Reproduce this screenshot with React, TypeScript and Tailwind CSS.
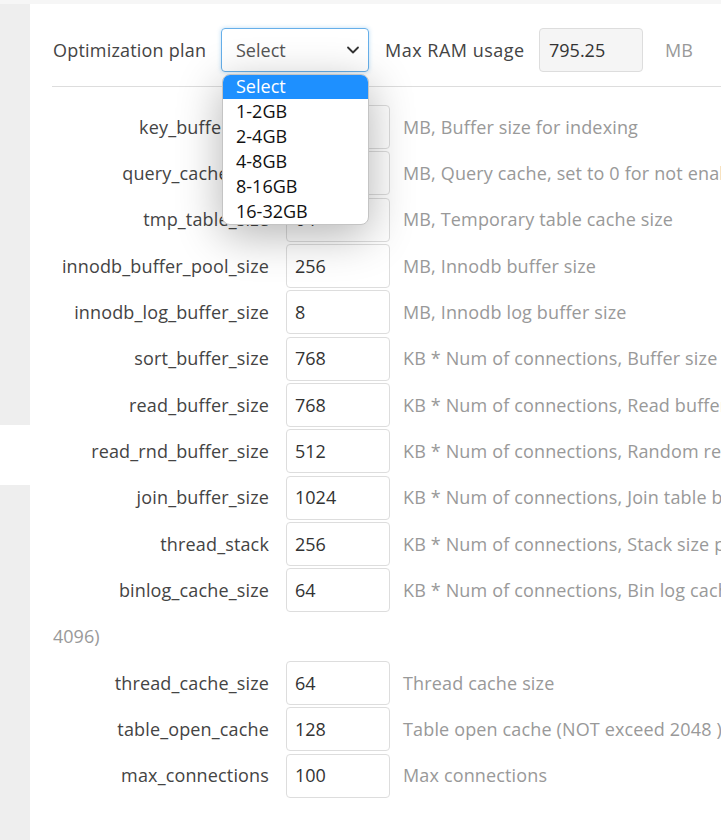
import React from "react";

const rows: { label: string; value: string; desc: string; extra?: string }[] = [
  { label: "key_buffer_size", value: "384", desc: "MB, Buffer size for indexing" },
  { label: "query_cache_size", value: "192", desc: "MB, Query cache, set to 0 for not enable" },
  { label: "tmp_table_size", value: "64", desc: "MB, Temporary table cache size" },
  { label: "innodb_buffer_pool_size", value: "256", desc: "MB, Innodb buffer size" },
  { label: "innodb_log_buffer_size", value: "8", desc: "MB, Innodb log buffer size" },
  { label: "sort_buffer_size", value: "768", desc: "KB * Num of connections, Buffer size for sorting" },
  { label: "read_buffer_size", value: "768", desc: "KB * Num of connections, Read buffer size" },
  { label: "read_rnd_buffer_size", value: "512", desc: "KB * Num of connections, Random read buffer size" },
  { label: "join_buffer_size", value: "1024", desc: "KB * Num of connections, Join table buffer size" },
  { label: "thread_stack", value: "256", desc: "KB * Num of connections, Stack size per thread" },
  { label: "binlog_cache_size", value: "64", desc: "KB * Num of connections, Bin log cache size (multiple of", extra: "4096)" },
  { label: "thread_cache_size", value: "64", desc: "Thread cache size" },
  { label: "table_open_cache", value: "128", desc: "Table open cache (NOT exceed 2048 )" },
  { label: "max_connections", value: "100", desc: "Max connections" },
];

const options = ["Select", "1-2GB", "2-4GB", "4-8GB", "8-16GB", "16-32GB"];

export default function App() {
  return (
    <div className="w-[721px] h-[840px] overflow-hidden flex flex-col bg-[#eeeeee] font-['Open_Sans',sans-serif] text-[18px]">
      <div className="h-[4px] shrink-0 bg-[#f6f6f6]" />
      <div className="flex flex-1 min-h-0">
        <div className="w-[30px] shrink-0 flex flex-col">
          <div className="h-[421px] bg-[#eeeeee]" />
          <div className="h-[60px] bg-white" />
          <div className="flex-1 bg-[#eeeeee]" />
        </div>
        <div className="w-[900px] shrink-0 bg-white pl-[23px] pt-[24px]">
          {/* header */}
          <div className="flex items-center h-[44px]">
            <span className="w-[154px] shrink-0 text-[#444] whitespace-nowrap tracking-[0.2px]">Optimization plan</span>
            <div className="relative ml-[14px]">
              <div className="w-[148px] h-[44px] rounded-[4px] border border-[#66afe9] shadow-[0_0_4px_rgba(102,175,233,0.45)] flex items-center pl-[14px] pr-[8px] text-[#555]">
                <span className="flex-1">Select</span>
                <svg width="14" height="14" viewBox="0 0 14 14">
                  <path d="M2 4.5 L7 9.5 L12 4.5" fill="none" stroke="#333" strokeWidth="1.8" strokeLinecap="round" strokeLinejoin="round" />
                </svg>
              </div>
              <div className="absolute left-[1px] top-[46px] w-[147px] z-10 bg-white rounded-[8px] border border-[#c4c4c4] overflow-hidden shadow-[0_10px_45px_rgba(0,0,0,0.3)]">
                {options.map((o, i) => (
                  <div
                    key={o}
                    className={
                      i === 0
                        ? "h-[24px] leading-[22px] pl-[13px] bg-[#1e90ff] text-white"
                        : "h-[25px] leading-[25px] pl-[13px] text-[#111]"
                    }
                  >
                    {o}
                  </div>
                ))}
              </div>
            </div>
            <span className="w-[140px] shrink-0 ml-[16px] text-[#444] whitespace-nowrap tracking-[0.5px]">Max RAM usage</span>
            <div className="ml-[14px] w-[104px] h-[44px] rounded-[4px] border border-[#dddddd] bg-[#f5f5f5] flex items-center pl-[9px] text-[#333]">
              795.25
            </div>
            <span className="ml-[22px] text-[#999]">MB</span>
          </div>
          <div className="mt-[14px] -ml-[1px] border-t border-[#dddddd]" />
          <div className="mt-[17px] flex flex-col">
            {rows.map((r) => (
              <React.Fragment key={r.label}>
                <div className="flex items-center h-[46.33px]">
                  <div className="w-[216px] text-right text-[#444] whitespace-nowrap tracking-[0.15px]">{r.label}</div>
                  <div className="ml-[17px] w-[104px] h-[44px] shrink-0 rounded-[4px] border border-[#dddddd] bg-white flex items-center pl-[8px] text-[#333]">
                    {r.value}
                  </div>
                  <span className="ml-[13px] text-[#999] whitespace-nowrap tracking-[0.15px]">{r.desc}</span>
                </div>
                {r.extra && (
                  <div className="h-[46.33px] flex items-center text-[#999]">{r.extra}</div>
                )}
              </React.Fragment>
            ))}
          </div>
        </div>
      </div>
    </div>
  );
}
